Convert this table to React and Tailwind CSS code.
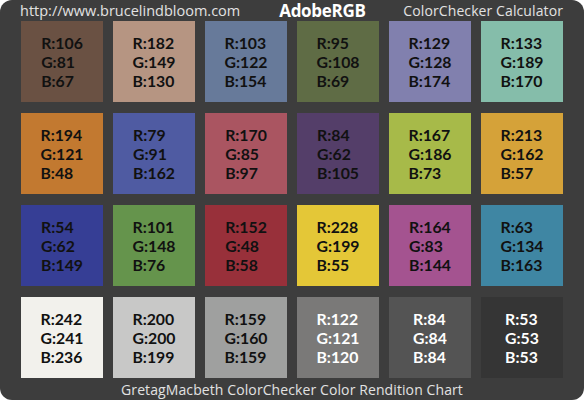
const patches = [
  [106, 81, 67], [182, 149, 130], [103, 122, 154], [95, 108, 69], [129, 128, 174], [133, 189, 170],
  [194, 121, 48], [79, 91, 162], [170, 85, 97], [84, 62, 105], [167, 186, 73], [213, 162, 57],
  [54, 62, 149], [101, 148, 76], [152, 48, 58], [228, 199, 55], [164, 83, 144], [63, 134, 163],
  [242, 241, 236], [200, 200, 199], [159, 160, 159], [122, 121, 120], [84, 84, 84], [53, 53, 53],
];

function Patch({ rgb, light }) {
  const [r, g, b] = rgb;
  return (
    <div
      className="w-[82px] h-[81px] flex items-center justify-center"
      style={{ backgroundColor: `rgb(${r},${g},${b})` }}
    >
      <div
        className={
          "text-left text-[15.8px] leading-[19px] font-bold " +
          (light ? "text-white" : "text-[#111]")
        }
        style={{ fontFamily: "Lato, sans-serif" }}
      >
        <div>R:{r}</div>
        <div>G:{g}</div>
        <div>B:{b}</div>
      </div>
    </div>
  );
}

export default function App() {
  return (
    <div className="w-[584px] h-[400px] bg-white" style={{ fontFamily: '"Open Sans", sans-serif' }}>
      <div className="w-full h-full bg-[#3d3d3d] rounded-[12px] flex flex-col">
        {/* header */}
        <div className="h-[21px] flex items-center pl-[20px] pr-[21px]">
          <span className="text-[14.5px] text-[#e2e2e2]">http://www.brucelindbloom.com</span>
          <span className="ml-[39px] text-[17px] font-bold text-white tracking-[-0.3px]">AdobeRGB</span>
          <span className="ml-auto text-[14px] text-[#e2e2e2] tracking-[0.1px]">ColorChecker Calculator</span>
        </div>

        {/* patches */}
        <div className="grid grid-cols-6 gap-x-[10px] gap-y-[11px] px-[21px]">
          {patches.map((p, i) => (
            <Patch key={i} rgb={p} light={i >= 21} />
          ))}
        </div>

        {/* caption */}
        <div className="flex-1 flex items-center justify-center text-[14px] text-[#e2e2e2] tracking-[0.1px]">
          GretagMacbeth ColorChecker Color Rendition Chart
        </div>
      </div>
    </div>
  );
}
